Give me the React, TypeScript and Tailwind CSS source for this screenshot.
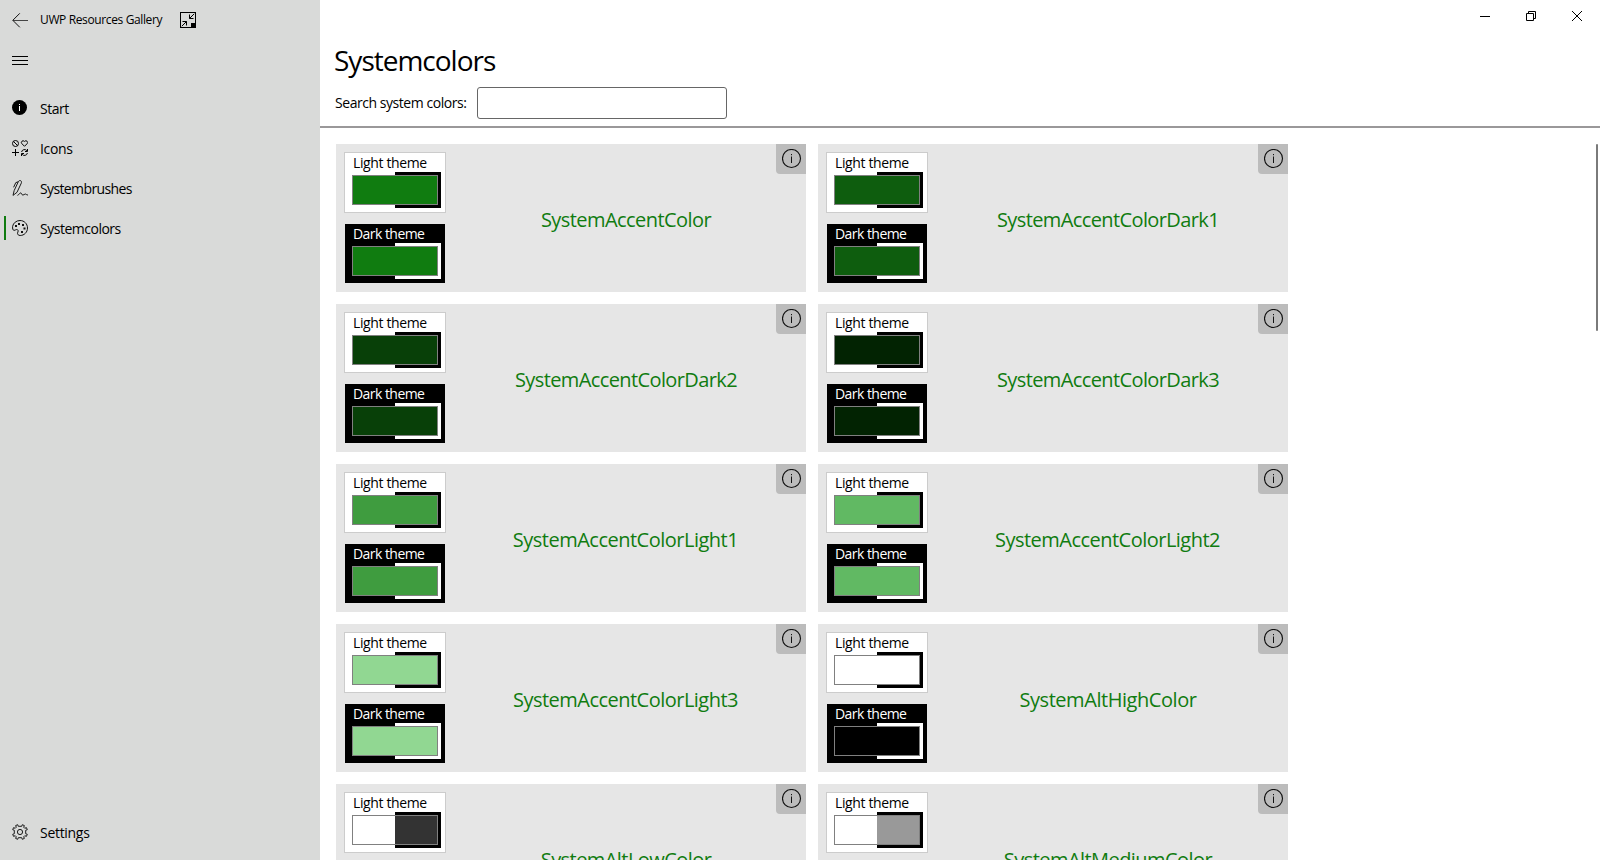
import React from "react";

type Swatch = { name: string; light: string; dark: string; tracking: string };

const SWATCHES: Swatch[] = [
  { name: "SystemAccentColor", light: "#107c10", dark: "#107c10", tracking: "tracking-[-0.56px]" },
  { name: "SystemAccentColorDark1", light: "#0e5d0e", dark: "#0e5d0e", tracking: "tracking-[-0.61px]" },
  { name: "SystemAccentColorDark2", light: "#084008", dark: "#084008", tracking: "tracking-[-0.61px]" },
  { name: "SystemAccentColorDark3", light: "#022302", dark: "#022302", tracking: "tracking-[-0.61px]" },
  { name: "SystemAccentColorLight1", light: "#3f9c3f", dark: "#3f9c3f", tracking: "mr-px tracking-[-0.5px]" },
  { name: "SystemAccentColorLight2", light: "#61b963", dark: "#61b963", tracking: "mr-px tracking-[-0.52px]" },
  { name: "SystemAccentColorLight3", light: "#91d792", dark: "#91d792", tracking: "mr-px tracking-[-0.52px]" },
  { name: "SystemAltHighColor", light: "#ffffff", dark: "#000000", tracking: "tracking-[-0.44px]" },
  { name: "SystemAltLowColor", light: "#ffffff33", dark: "#00000033", tracking: "tracking-[-0.56px]" },
  { name: "SystemAltMediumColor", light: "#ffffff99", dark: "#00000099", tracking: "tracking-[-0.55px]" },
];

function BackIcon() {
  return (
    <svg width="16" height="16" viewBox="0 0 16 16" fill="none" stroke="#111">
      <path d="M16 8.5H1" stroke="#444" />
      <path d="M7.8 1.300L0.800 8.300L7.800 15.300" />
    </svg>
  );
}

function CompactIcon() {
  return (
    <svg width="16" height="16" viewBox="0 0 16 16" fill="none" stroke="#000">
      <rect x="0.5" y="0.5" width="15" height="15" />
      <path d="M11 11h5v5h-5z" fill="#000" stroke="none" />
      <path d="M14.200 1.800L9.500 6.500M9.500 2.500v4h4M1.800 14.200L6.500 9.500M2.500 9.500h4v4" />
    </svg>
  );
}

function MenuIcon() {
  return (
    <svg width="16" height="9" viewBox="0 0 16 9" stroke="#000" shapeRendering="crispEdges">
      <path d="M0 0.5h16M0 4.5h16M0 8.5h16" />
    </svg>
  );
}

function StartIcon() {
  return (
    <svg width="16" height="16" viewBox="0 0 16 16">
      <circle cx="7.5" cy="7.5" r="7.5" fill="#000" />
      <path d="M7 6h1v5H7zM7 4h1v1H7z" fill="#fff" />
    </svg>
  );
}

function IconsIcon() {
  return (
    <svg width="16" height="16" viewBox="0 0 16 16" fill="none" stroke="#000">
      <circle cx="3.5" cy="3.5" r="3" />
      <path d="M1.400 1.400l4.200 4.200" />
      <path d="M12.500 6.300L9.900 3.700a1.700 1.700 0 0 1 0-2.400 1.700 1.700 0 0 1 2.400 0l.2.2.2-.2a1.700 1.700 0 0 1 2.400 0 1.700 1.700 0 0 1 0 2.400z" />
      <path d="M3.500 9v7M0 12.500h7" />
      <path d="M9.600 12a3 3 0 0 1 5.300-1.300M15.500 9v2.500H13M15.400 13a3 3 0 0 1-5.300 1.300M9.500 16v-2.500H12" />
    </svg>
  );
}

function BrushIcon() {
  return (
    <svg width="16" height="16" viewBox="0 0 16 16" fill="none" stroke="#111" strokeWidth="0.95">
      <path d="M1 15.400L2.200 10.500L6.300 1.700C6.900.4 8.300.3 9 .9C9.700 1.500 9.600 2.300 9.300 3.100L5 12.300z" />
      <path d="M6.200 1.800L3.800 2.600L1.600 7.300" />
      <path d="M5.500 15.400C7 14.900 7.600 12.800 8.700 12.900C9.800 13 9.500 15 10.900 15.100C12 15.200 12.200 14 13.200 14C14.200 14 14.400 15 16 15" />
    </svg>
  );
}

function PaletteIcon() {
  return (
    <svg width="16" height="16" viewBox="0 0 16 16" fill="none" stroke="#111">
      <path d="M.6 6.400C1.200 3 4.400.5 8 .5c4.200 0 7.500 3.300 7.500 7.500s-3.300 7.500-7.300 7.500c-1.700 0-2.700-1-2.700-2.200 0-1 .7-1.500.7-2.300 0-.9-.7-1.500-1.500-1.500-1.100 0-1.500.9-2.600.9C.9 10.400.4 8.600.6 6.400z" />
      <path d="M3 5h2v2H3zM6 3h2v2H6zM10 4h2v2h-2zM11.500 7.500h2v2h-2zM9 11h2v2H9z" fill="#111" stroke="none" />
    </svg>
  );
}

function GearIcon() {
  return (
    <svg width="16" height="16" viewBox="0 0 16 16" fill="none" stroke="#111" strokeWidth="0.95">
      <path d="M6.300 2.300L5.700.700L3.600 1.600L4.300 3.200L3.200 4.300L1.600 3.600L.700 5.700L2.300 6.300V9.700L.700 10.300L1.600 12.400L3.200 11.700L4.300 12.800L3.600 14.400L5.700 15.300L6.300 13.700H9.700L10.300 15.300L12.400 14.400L11.700 12.800L12.800 11.700L14.400 12.400L15.300 10.300L13.700 9.700V6.300L15.300 5.700L14.400 3.600L12.800 4.300L11.700 3.200L12.400 1.600L10.300.700L9.700 2.300z" />
      <circle cx="8" cy="8" r="2.600" />
    </svg>
  );
}

function InfoIcon() {
  return (
    <svg width="20" height="20" viewBox="0 0 20 20" fill="none" stroke="#111">
      <circle cx="9.500" cy="9.500" r="9" strokeWidth="1.150" />
      <path d="M9.500 7.500v6.500M9.500 5v1.200" />
    </svg>
  );
}

function NavItem({ icon, label, active, spacing }: { icon: React.ReactNode; label: string; active?: boolean; spacing: string }) {
  return (
    <div className="flex h-10 items-center">
      <div className={`ml-1 h-6 w-0.5 ${active ? "bg-[#107c10]" : ""}`} />
      <div className="ml-1.5 w-7">{icon}</div>
      <span className={`whitespace-nowrap pt-0.5 text-[14px] leading-5 ${spacing}`}>{label}</span>
    </div>
  );
}

function ThemePreview({ dark, color }: { dark?: boolean; color: string }) {
  return (
    <div className={`relative h-[59px] w-[100px] ${dark ? "bg-black text-white" : "bg-white text-black outline outline-[#cccccc]"}`}>
      <div className={`pl-2 text-[14px] leading-5 ${dark ? "font-medium tracking-[-0.55px]" : "tracking-[-0.38px]"}`}>
        {dark ? "Dark theme" : "Light theme"}
      </div>
      <div className={`absolute left-[50px] top-[19px] h-9 w-[46px] ${dark ? "bg-white" : "bg-black"}`} />
      <div className="absolute left-[7px] top-[22px] h-[30px] w-[86px] border border-[#808080] bg-clip-padding" style={{ backgroundColor: color }} />
    </div>
  );
}

function ColorCard({ swatch }: { swatch: Swatch }) {
  return (
    <div className="relative flex h-[148px] w-[470px] bg-[#e6e6e6]">
      <div className="flex flex-col gap-3 pl-[9px] pt-[9px]">
        <ThemePreview color={swatch.light} />
        <ThemePreview dark color={swatch.dark} />
      </div>
      <div className="flex flex-1 items-center justify-center pl-px pt-1 text-[20px] text-[#107c10]">
        <span className={`whitespace-nowrap ${swatch.tracking}`}>{swatch.name}</span>
      </div>
      <button className="absolute right-0 top-0 flex h-[30px] w-[30px] items-start rounded-bl bg-[#bcbcbc] pl-1.5 pt-[5px]">
        <InfoIcon />
      </button>
    </div>
  );
}

export default function App() {
  return (
    <div className="flex h-[860px] w-[1600px] overflow-hidden bg-white font-['Open_Sans','Noto_Sans',sans-serif] text-black">
      <aside className="flex h-full w-80 flex-col bg-[#d9dad9]">
        <div className="flex h-10 items-center pl-3">
          <BackIcon />
          <span className="ml-3 w-[140px] whitespace-nowrap text-[12px] tracking-[-0.37px]">UWP Resources Gallery</span>
          <CompactIcon />
        </div>
        <div className="flex h-10 items-center pl-3"><MenuIcon /></div>
        <nav className="mt-2 flex flex-1 flex-col">
          <NavItem icon={<StartIcon />} label="Start" spacing="tracking-[-0.5px]" />
          <NavItem icon={<IconsIcon />} label="Icons" spacing="tracking-[-0.35px]" />
          <NavItem icon={<BrushIcon />} label="Systembrushes" spacing="tracking-[-0.62px]" />
          <NavItem icon={<PaletteIcon />} label="Systemcolors" active spacing="tracking-[-0.49px]" />
        </nav>
        <div className="mb-2"><NavItem icon={<GearIcon />} label="Settings" spacing="tracking-[-0.3px]" /></div>
      </aside>
      <main className="flex h-full flex-1 flex-col">
        <header className="h-32 border-b-2 border-[#9a9899]">
          <div className="flex h-8 items-center justify-end gap-9 pr-[18px]">
            <svg width="10" height="10" stroke="#000"><path d="M0 5.500h10" /></svg>
            <svg width="10" height="10" fill="none" stroke="#000"><path d="M.500 2.500h7v7h-7zM2.500 2.500v-2h7v7h-2" /></svg>
            <svg width="10" height="10" stroke="#000"><path d="M0 0l10 10M10 0L0 10" /></svg>
          </div>
          <h1 className="h-[55px] pl-[14px] pt-[9px] text-[28px] leading-[38px] tracking-[-1px]">Systemcolors</h1>
          <label className="flex h-8 items-center pl-[15px]">
            <span className="w-[142px] whitespace-nowrap pb-px text-[14px] tracking-[-0.45px]">Search system colors:</span>
            <input className="h-8 w-[250px] rounded-[3px] border border-[#666] bg-white" />
          </label>
        </header>
        <section className="flex flex-1 justify-between overflow-hidden pl-4 pr-0.5 pt-4">
          <div className="grid h-max grid-cols-[470px_470px] gap-3">
            {SWATCHES.map((s) => <ColorCard key={s.name} swatch={s} />)}
          </div>
          <div className="h-[187px] w-0.5 rounded-full bg-[#7a7a7a]" />
        </section>
      </main>
    </div>
  );
}
